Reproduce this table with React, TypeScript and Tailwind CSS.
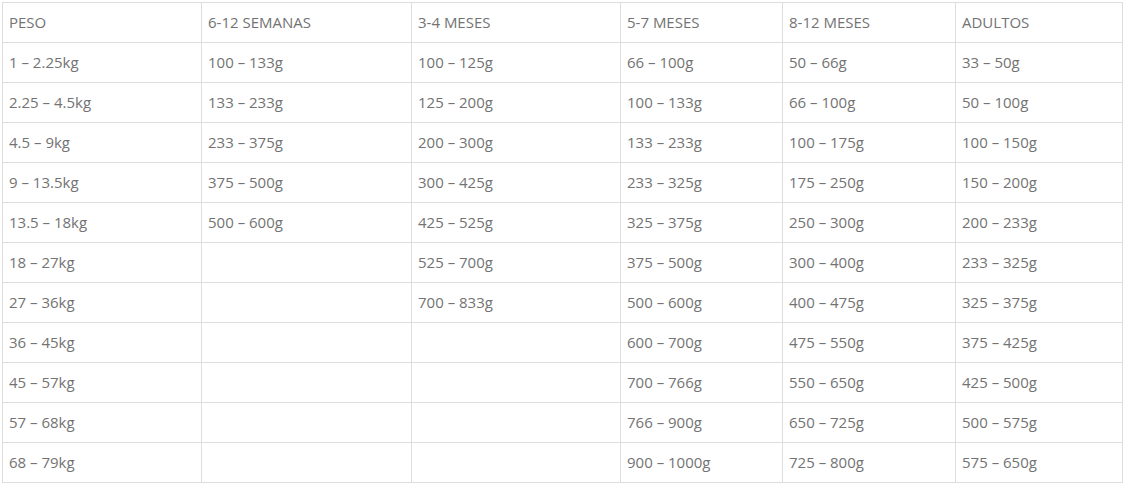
const header = ["PESO", "6-12 SEMANAS", "3-4 MESES", "5-7 MESES", "8-12 MESES", "ADULTOS"];

const rows: string[][] = [
  ["1 – 2.25kg", "100 – 133g", "100 – 125g", "66 – 100g", "50 – 66g", "33 – 50g"],
  ["2.25 – 4.5kg", "133 – 233g", "125 – 200g", "100 – 133g", "66 – 100g", "50 – 100g"],
  ["4.5 – 9kg", "233 – 375g", "200 – 300g", "133 – 233g", "100 – 175g", "100 – 150g"],
  ["9 – 13.5kg", "375 – 500g", "300 – 425g", "233 – 325g", "175 – 250g", "150 – 200g"],
  ["13.5 – 18kg", "500 – 600g", "425 – 525g", "325 – 375g", "250 – 300g", "200 – 233g"],
  ["18 – 27kg", "", "525 – 700g", "375 – 500g", "300 – 400g", "233 – 325g"],
  ["27 – 36kg", "", "700 – 833g", "500 – 600g", "400 – 475g", "325 – 375g"],
  ["36 – 45kg", "", "", "600 – 700g", "475 – 550g", "375 – 425g"],
  ["45 – 57kg", "", "", "700 – 766g", "550 – 650g", "425 – 500g"],
  ["57 – 68kg", "", "", "766 – 900g", "650 – 725g", "500 – 575g"],
  ["68 – 79kg", "", "", "900 – 1000g", "725 – 800g", "575 – 650g"],
];

export default function App() {
  const all = [header, ...rows];
  return (
    <div className="min-h-screen bg-white p-[2px] font-['Open_Sans',sans-serif] text-[15px] text-[#737373]">
      <div className="grid w-fit grid-cols-[199px_210px_209px_162px_173px_167px] border-l border-t border-[#dddddd]">
        {all.map((row, r) =>
          row.map((cell, c) => (
            <div
              key={`${r}-${c}`}
              className="flex h-[40px] items-center border-b border-r border-[#dddddd] pl-[6px]"
            >
              {cell}
            </div>
          ))
        )}
      </div>
    </div>
  );
}
